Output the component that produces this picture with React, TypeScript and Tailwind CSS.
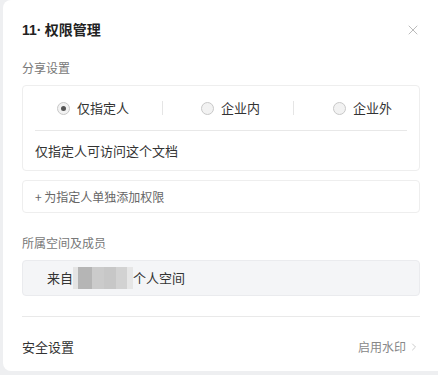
import { X, ChevronRight } from 'lucide-react'

const font = { fontFamily: '"Noto Sans CJK SC", "Liberation Sans", sans-serif' }

function Radio({ label, checked }: { label: string; checked?: boolean }) {
  return (
    <label className="flex items-center gap-[7px] text-[13px] text-[#333] whitespace-nowrap shrink-0">
      <span className="w-[13px] h-[13px] shrink-0 rounded-full border border-[#c8c8c8] bg-[#f2f2f2] flex items-center justify-center">
        {checked && <span className="w-[5px] h-[5px] rounded-full bg-[#555]" />}
      </span>
      {label}
    </label>
  )
}

export default function App() {
  return (
    <div className="w-[438px] h-[375px] bg-[#eeeff1] pl-[3px] overflow-hidden" style={font}>
      <div className="w-[440px] h-[371px] bg-white rounded-l-[8px] pl-[19px] pr-[21px] pt-[19px]">
        <div className="flex items-center justify-between h-[22px] w-[398px]">
          <h3 className="text-[14px] font-bold text-[#222]">
            <span className="font-['Liberation_Sans',sans-serif]">11·</span> 权限管理
          </h3>
          <X className="h-[16px] w-[16px] text-[#999] -mr-[1px]" strokeWidth={1} />
        </div>

        <div className="mt-[18px] text-[12px] text-[#777]">分享设置</div>

        <div className="mt-[8px] w-[398px] border border-[#eeeeee] rounded-[4px]">
          <div className="flex items-center h-[44px] pl-[34px]">
            <Radio label="仅指定人" checked />
            <span className="ml-[33px] w-px h-[14px] bg-[#e5e5e5] shrink-0" />
            <div className="ml-[38px] shrink-0"><Radio label="企业内" /></div>
            <span className="ml-[33px] w-px h-[14px] bg-[#e5e5e5] shrink-0" />
            <div className="ml-[39px] shrink-0"><Radio label="企业外" /></div>
          </div>
          <div className="mx-[12px] border-t border-[#e8e8e8]" />
          <div className="px-[12px] h-[39px] flex items-center text-[13px] text-[#333]">仅指定人可访问这个文档</div>
        </div>

        <div className="mt-[9px] w-[398px] h-[33px] border border-[#eeeeee] rounded-[4px] px-[12px] flex items-center text-[12px] text-[#666]">
          + 为指定人单独添加权限
        </div>

        <div className="mt-[21px] text-[12px] text-[#777]">所属空间及成员</div>

        <div className="mt-[8px] w-[398px] h-[36px] bg-[#f4f5f7] border border-[#eaebee] rounded-[4px] pl-[24px] flex items-center text-[13px] text-[#333]">
          来自
          <span className="flex h-[22px] w-[60px]">
            <span className="w-[5px] bg-[#e4e4e4]" />
            <span className="w-[14px] bg-[#b5b5b5]" />
            <span className="w-[12px] bg-[#cbcbcb]" />
            <span className="w-[12px] bg-[#c7c7c7]" />
            <span className="w-[11px] bg-[#d2d2d2]" />
            <span className="w-[6px] bg-[#e6e6e6]" />
          </span>
          个人空间
        </div>

        <div className="mt-[20px] w-[398px] border-t border-[#e9e9e9]" />

        <div className="w-[398px] h-[60px] flex items-center justify-between">
          <span className="text-[13px] text-[#333]">安全设置</span>
          <span className="flex items-center text-[12px] text-[#888]">
            启用水印
            <ChevronRight className="h-[12px] w-[12px] text-[#bbb] ml-[2px]" strokeWidth={1.5} />
          </span>
        </div>
      </div>
    </div>
  )
}
